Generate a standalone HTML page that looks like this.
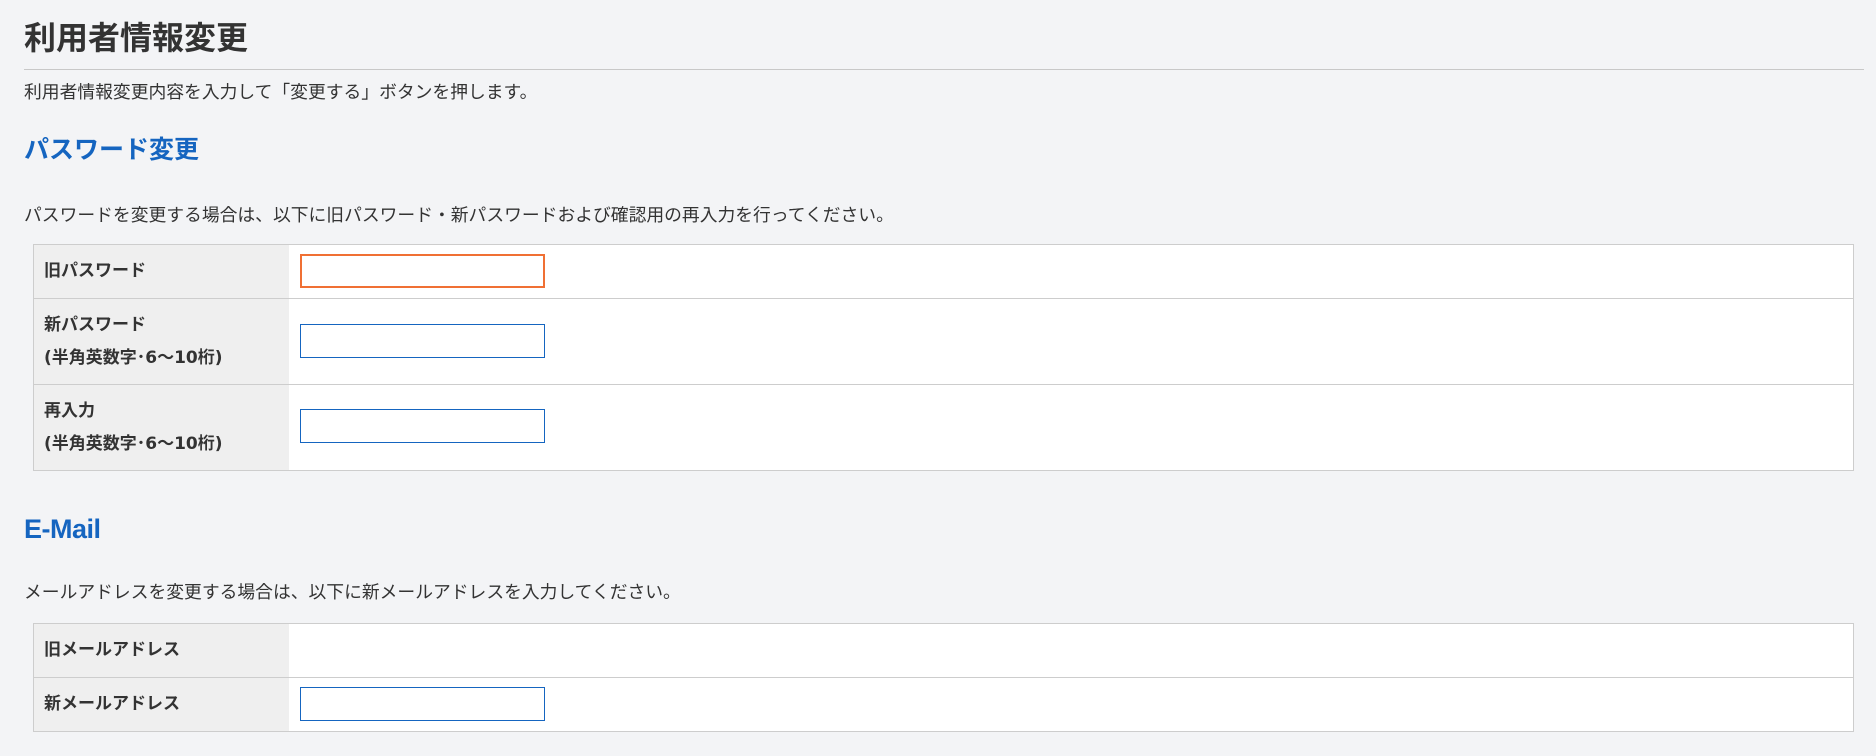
<!DOCTYPE html>
<html><head><meta charset="utf-8"><style>
*{margin:0;padding:0;box-sizing:border-box}
body{width:1876px;height:756px;background:#f3f4f6;font-family:"Liberation Sans","Noto Sans CJK JP",sans-serif;color:#333;position:relative;overflow:hidden}
h1{position:absolute;left:24px;top:16px;font-size:32px;font-weight:bold;color:#333;line-height:44px}
.hr{position:absolute;left:24px;top:69px;width:1840px;height:1px;background:#c8c8c8}
.p{position:absolute;left:24px;font-size:17.8px;line-height:24px;color:#333}
h2{position:absolute;left:24px;font-size:25px;font-weight:bold;color:#1565c0;line-height:32px;font-family:"DejaVu Sans","Noto Sans CJK JP",sans-serif}
.t{position:absolute;left:33px;width:1821px;border:1px solid #cdcdcd;background:#fff}
.r{position:relative;border-top:1px solid #cdcdcd}
.r:first-child{border-top:none}
.l{position:absolute;left:0;top:0;bottom:0;width:255px;background:#efefef;font-weight:bold;font-size:17px;padding-left:10px;display:flex;flex-direction:column;justify-content:center;line-height:33px;color:#333;font-family:"DejaVu Sans","Noto Sans CJK JP",sans-serif}
.i{position:absolute;left:266px;width:245px;height:34px;border:1px solid #1565c0;background:#fff}
</style></head><body>
<h1>利用者情報変更</h1>
<div class="hr"></div>
<div class="p" style="top:80px">利用者情報変更内容を入力して「変更する」ボタンを押します。</div>
<h2 style="top:134px">パスワード変更</h2>
<div class="p" style="top:203px">パスワードを変更する場合は、以下に旧パスワード・新パスワードおよび確認用の再入力を行ってください。</div>
<div class="t" style="top:244px">
 <div class="r" style="height:53px"><div class="l">旧パスワード</div><div class="i" style="top:9px;border-color:#f07034;border-width:2px"></div></div>
 <div class="r" style="height:86px"><div class="l"><div>新パスワード</div><div>(半角英数字･6～10桁)</div></div><div class="i" style="top:25px"></div></div>
 <div class="r" style="height:86px"><div class="l"><div>再入力</div><div>(半角英数字･6～10桁)</div></div><div class="i" style="top:24px"></div></div>
</div>
<h2 style="top:513px;font-family:'Liberation Sans',sans-serif;font-size:27px;letter-spacing:-0.5px">E-Mail</h2>
<div class="p" style="top:580px">メールアドレスを変更する場合は、以下に新メールアドレスを入力してください。</div>
<div class="t" style="top:623px">
 <div class="r" style="height:53px"><div class="l">旧メールアドレス</div></div>
 <div class="r" style="height:54px"><div class="l">新メールアドレス</div><div class="i" style="top:9px"></div></div>
</div>
</body></html>
